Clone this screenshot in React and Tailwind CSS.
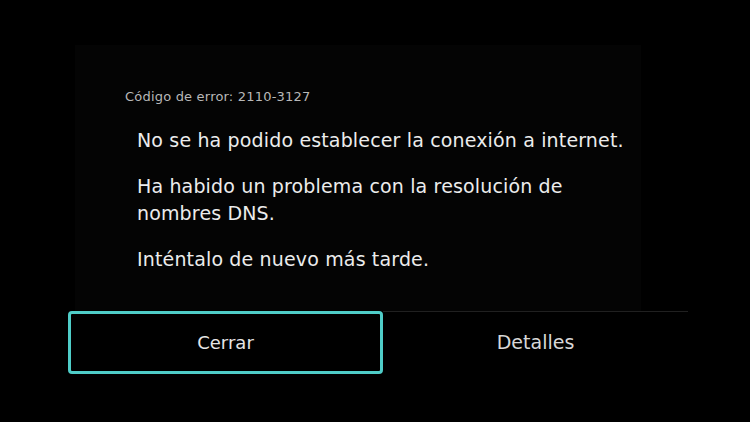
import React from 'react';

const App = () => {
  return (
    <div className="w-[750px] h-[422px] bg-black overflow-hidden font-['DejaVu_Sans',sans-serif] pt-[45px]">
      <div className="ml-[75px] w-[566px] h-[266px] bg-[#040404] pt-[44px] pl-[50px]">
        <p className="text-[13px] leading-[16px] tracking-[0.2px] text-[#b8b8b8]">Código de error: 2110-3127</p>
        <div className="mt-[22px] pl-[12px] flex flex-col gap-[19px] text-[19px] leading-[27px] tracking-[0.15px] text-[#ececec]">
          <p className="whitespace-nowrap">No se ha podido establecer la conexión a internet.</p>
          <p className="whitespace-nowrap">
            Ha habido un problema con la resolución de
            <br />
            nombres DNS.
          </p>
          <p>Inténtalo de nuevo más tarde.</p>
        </div>
      </div>
      <div className="flex pl-[68px]">
        <button className="w-[315px] h-[63px] border-[3px] border-[#4fcdc8] rounded-[4px] bg-black text-[18px] text-[#e6e6e6]">
          Cerrar
        </button>
        <div className="w-[305px] h-[62px] border-t border-[#202020] flex items-center justify-center text-[19px] text-[#d8d8d8]">
          Detalles
        </div>
      </div>
    </div>
  );
};

export default App;
